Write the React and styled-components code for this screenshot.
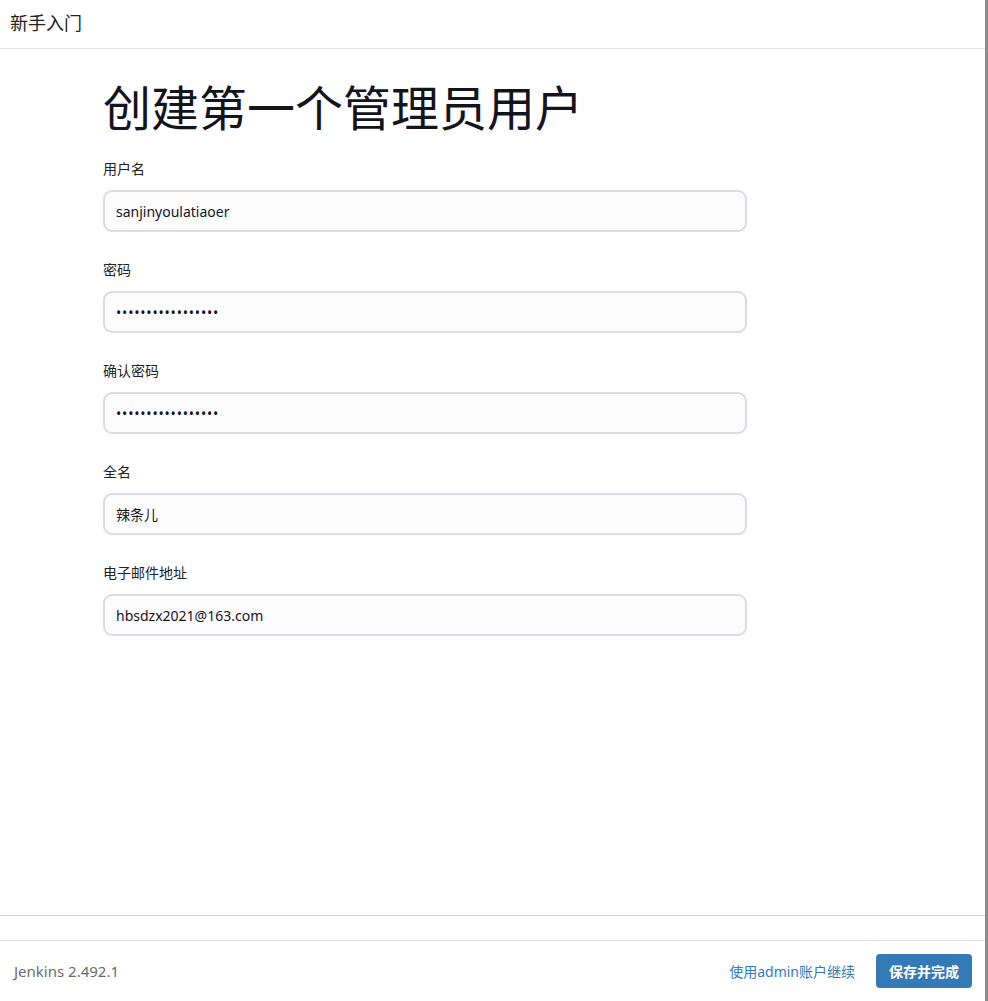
import React, { useState } from "react";
import styled, { createGlobalStyle } from "styled-components";

const GlobalStyle = createGlobalStyle`
  html, body {
    margin: 0;
    padding: 0;
    background: #fff;
  }
  body {
    font-family: "Noto Sans", "Noto Sans CJK SC", sans-serif;
    color: #14141f;
  }
  * { box-sizing: border-box; }
`;

const Frame = styled.div`
  width: 988px;
  height: 1001px;
  display: flex;
  flex-direction: column;
  border-right: 3px solid #8c8c8c;
  background: #fff;
`;

const Header = styled.header`
  height: 49px;
  flex: none;
  display: flex;
  align-items: center;
  padding: 0 10px 4px;
  border-bottom: 1px solid #e5e5e5;
  font-size: 18px;
  color: #222;
`;

const Body = styled.main`
  flex: 1;
  padding: 27px 0 0 103px;
  border-bottom: 1px solid #cfcfcf;
`;

const Title = styled.h1`
  margin: 0 0 20px;
  font-size: 48px;
  font-weight: 400;
  line-height: 64px;
  color: #14141f;
`;

const Field = styled.div`
  width: 644px;
  display: flex;
  flex-direction: column;
  margin-bottom: 29px;
`;

const Label = styled.label`
  font-size: 14px;
  line-height: 18px;
  margin-bottom: 12px;
  color: #222;
`;

const Input = styled.input`
  height: 42px;
  width: 100%;
  padding: 0 11px;
  border: 2px solid #d9dce6;
  border-radius: 9px;
  background: #fcfcfd;
  font-family: "Noto Sans", "Noto Sans CJK SC", sans-serif;
  font-size: 14px;
  color: #14141f;
  outline: none;
  letter-spacing: ${(p) => (p.type === "password" ? "0.8px" : "0")};
`;

const Gap = styled.div`
  height: 24px;
  flex: none;
`;

const Footer = styled.footer`
  height: 61px;
  flex: none;
  display: flex;
  align-items: center;
  padding: 0 13px 0 14px;
  border-top: 1px solid #e5e5e5;
`;

const Version = styled.span`
  font-size: 15px;
  color: #6b6b6b;
  flex: 1;
`;

const LinkText = styled.a`
  font-size: 14px;
  color: #337ab7;
  text-decoration: none;
  margin-right: 21px;
  cursor: pointer;
`;

const Button = styled.button`
  width: 96px;
  height: 34px;
  border: none;
  border-radius: 4px;
  background: #337ab7;
  color: #fff;
  font-family: "Noto Sans CJK SC", sans-serif;
  font-size: 14px;
  font-weight: 700;
  cursor: pointer;
`;

const fields = [
  { name: "username", label: "用户名", type: "text", value: "sanjinyoulatiaoer" },
  { name: "password", label: "密码", type: "password", value: "sanjinyoulatiaoer" },
  { name: "confirm", label: "确认密码", type: "password", value: "sanjinyoulatiaoer" },
  { name: "fullname", label: "全名", type: "text", value: "辣条儿" },
  { name: "email", label: "电子邮件地址", type: "text", value: "hbsdzx2021@163.com" },
];

const App = () => {
  const [values, setValues] = useState(
    Object.fromEntries(fields.map((f) => [f.name, f.value]))
  );

  return (
    <>
      <GlobalStyle />
      <Frame>
        <Header>新手入门</Header>
        <Body>
          <Title>创建第一个管理员用户</Title>
          {fields.map((f) => (
            <Field key={f.name}>
              <Label htmlFor={f.name}>{f.label}</Label>
              <Input
                id={f.name}
                type={f.type}
                value={values[f.name]}
                onChange={(e) => setValues({ ...values, [f.name]: e.target.value })}
              />
            </Field>
          ))}
        </Body>
        <Gap />
        <Footer>
          <Version>Jenkins 2.492.1</Version>
          <LinkText>使用admin账户继续</LinkText>
          <Button type="button">保存并完成</Button>
        </Footer>
      </Frame>
    </>
  );
};

export default App;
